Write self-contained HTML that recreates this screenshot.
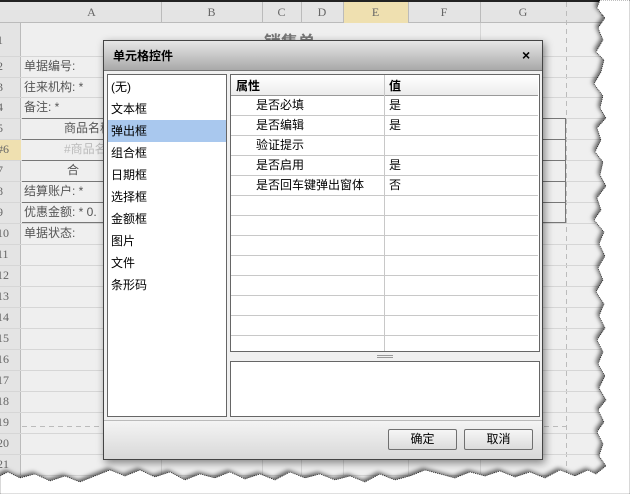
<!DOCTYPE html><html><head><meta charset="utf-8"><style>
*{margin:0;padding:0;box-sizing:border-box}
body{width:630px;height:494px;overflow:hidden;background:#fff;position:relative;font-family:"Liberation Sans","Noto Sans CJK SC",sans-serif;font-size:12px;color:#000}
.a{position:absolute}
.sh{position:absolute;left:0;top:0;width:630px;height:494px;background:#efefef}
.hl{position:absolute;height:1px;background:#d6d6d6}
.vl{position:absolute;width:1px;background:#d6d6d6}
.ch{position:absolute;top:2px;height:21px;line-height:21px;text-align:center;color:#666;font-family:"Liberation Serif",serif;font-size:12px}
.rh{position:absolute;left:-3px;width:21px;height:21px;line-height:21px;color:#666;font-size:12px;font-family:"Liberation Serif",serif}
.ct{position:absolute;left:24px;color:#555;height:21px;line-height:21px}
.li{position:absolute;left:108px;width:118px;height:22px;line-height:22px;padding-left:3px}
.tr{position:absolute;left:231px;width:307px;height:20px;border-bottom:1px solid #c8c8c8}
.tr span{position:absolute;top:0;line-height:19px}
.btn{position:absolute;top:429px;height:21px;border:1px solid #707070;border-radius:2px;background:linear-gradient(#f6f6f6,#dcdcdc);text-align:center;line-height:19px}
</style></head><body>
<div class="sh"></div>
<div class="a" style="left:0;top:0;width:630px;height:2px;background:#222"></div>
<div class="a" style="left:0;top:2px;width:630px;height:21px;background:#e4e4e4;border-bottom:1px solid #bbb"></div>
<div class="a" style="left:0;top:23px;width:21px;height:471px;background:#e4e4e4;border-right:1px solid #bbb"></div>
<div class="a" style="left:343px;top:2px;width:65px;height:21px;background:#efe0b0"></div>
<div class="a" style="left:0;top:139px;width:21px;height:21px;background:#efe0b0"></div>
<div class="ch" style="left:22px;width:139px">A</div>
<div class="ch" style="left:161px;width:101px">B</div>
<div class="ch" style="left:262px;width:39px">C</div>
<div class="ch" style="left:301px;width:42px">D</div>
<div class="ch" style="left:343px;width:65px">E</div>
<div class="ch" style="left:408px;width:72px">F</div>
<div class="ch" style="left:480px;width:86px">G</div>
<div class="ch" style="left:590px;width:30px">H</div>
<div class="vl" style="left:161px;top:2px;height:21px;background:#bbb"></div>
<div class="vl" style="left:262px;top:2px;height:21px;background:#bbb"></div>
<div class="vl" style="left:301px;top:2px;height:21px;background:#bbb"></div>
<div class="vl" style="left:343px;top:2px;height:21px;background:#bbb"></div>
<div class="vl" style="left:408px;top:2px;height:21px;background:#bbb"></div>
<div class="vl" style="left:480px;top:2px;height:21px;background:#bbb"></div>
<div class="vl" style="left:161px;top:244px;height:240px"></div>
<div class="vl" style="left:262px;top:244px;height:240px"></div>
<div class="vl" style="left:301px;top:244px;height:240px"></div>
<div class="vl" style="left:343px;top:244px;height:240px"></div>
<div class="vl" style="left:408px;top:244px;height:240px"></div>
<div class="vl" style="left:566px;top:2px;height:480px;background:repeating-linear-gradient(#bbb 0 5px,transparent 5px 9px)"></div>
<div class="vl" style="left:480px;top:23px;height:460px"></div>
<div class="hl" style="left:22px;top:426px;width:544px;background:repeating-linear-gradient(90deg,#bbb 0 5px,transparent 5px 9px)"></div>
<div class="hl" style="left:0;top:56px;width:630px"></div>
<div class="hl" style="left:0;top:77px;width:630px"></div>
<div class="hl" style="left:0;top:97px;width:630px"></div>
<div class="hl" style="left:0;top:118px;width:630px"></div>
<div class="hl" style="left:0;top:139px;width:630px"></div>
<div class="hl" style="left:0;top:160px;width:630px"></div>
<div class="hl" style="left:0;top:181px;width:630px"></div>
<div class="hl" style="left:0;top:202px;width:630px"></div>
<div class="hl" style="left:0;top:223px;width:630px"></div>
<div class="hl" style="left:0;top:244px;width:630px"></div>
<div class="hl" style="left:0;top:265px;width:630px"></div>
<div class="hl" style="left:0;top:286px;width:630px"></div>
<div class="hl" style="left:0;top:307px;width:630px"></div>
<div class="hl" style="left:0;top:328px;width:630px"></div>
<div class="hl" style="left:0;top:349px;width:630px"></div>
<div class="hl" style="left:0;top:370px;width:630px"></div>
<div class="hl" style="left:0;top:391px;width:630px"></div>
<div class="hl" style="left:0;top:412px;width:630px"></div>
<div class="hl" style="left:0;top:433px;width:630px"></div>
<div class="hl" style="left:0;top:454px;width:630px"></div>
<div class="hl" style="left:0;top:475px;width:630px"></div>
<div class="a" style="left:22px;top:118px;width:544px;height:105px;border:1px solid #777;border-left:none"></div>
<div class="a" style="left:22px;top:139px;width:544px;height:1px;background:#777"></div>
<div class="a" style="left:22px;top:160px;width:544px;height:1px;background:#777"></div>
<div class="a" style="left:22px;top:181px;width:544px;height:1px;background:#777"></div>
<div class="a" style="left:22px;top:202px;width:544px;height:1px;background:#777"></div>
<div class="rh" style="top:30px">1</div>
<div class="rh" style="top:56px">2</div><div class="rh" style="top:77px">3</div><div class="rh" style="top:97px">4</div><div class="rh" style="top:118px">5</div><div class="rh" style="top:139px">#6</div><div class="rh" style="top:160px">7</div><div class="rh" style="top:181px">8</div><div class="rh" style="top:202px">9</div><div class="rh" style="top:223px">10</div><div class="rh" style="top:244px">11</div><div class="rh" style="top:265px">12</div><div class="rh" style="top:286px">13</div><div class="rh" style="top:307px">14</div><div class="rh" style="top:328px">15</div><div class="rh" style="top:349px">16</div><div class="rh" style="top:370px">17</div><div class="rh" style="top:391px">18</div><div class="rh" style="top:412px">19</div><div class="rh" style="top:433px">20</div><div class="rh" style="top:454px">21</div>
<div class="a" style="left:264px;top:28px;font-size:17px;font-weight:bold;color:#777">销售单</div>
<div class="ct" style="top:56px">单据编号:</div>
<div class="ct" style="top:77px">往来机构: *</div>
<div class="ct" style="top:97px">备注: *</div>
<div class="ct" style="top:118px;left:64px">商品名称</div>
<div class="ct" style="top:139px;left:64px;color:#bbb">#商品名</div>
<div class="ct" style="top:160px;left:67px">合</div>
<div class="ct" style="top:181px">结算账户: *</div>
<div class="ct" style="top:202px">优惠金额: * 0.</div>
<div class="ct" style="top:223px">单据状态:</div>
<div class="a" style="left:103px;top:40px;width:440px;height:420px;background:#f0f0f0;border:1px solid #444;box-shadow:2px 3px 8px rgba(0,0,0,.45)"></div>
<div class="a" style="left:104px;top:41px;width:438px;height:30px;background:linear-gradient(#e6e6e6,#a9a9a9);border-bottom:1px solid #777"></div>
<div class="a" style="left:113px;top:48px;font-weight:bold;font-size:12px;line-height:16px">单元格控件</div>
<div class="a" style="left:522px;top:47px;font-weight:bold;font-size:14px">×</div>
<div class="a" style="left:107px;top:74px;width:120px;height:343px;background:#fff;border:1px solid #666"></div>
<div class="a" style="left:108px;top:120px;width:118px;height:22px;background:#a9c8ee"></div>
<div class="li" style="top:76px">(无)</div><div class="li" style="top:98px">文本框</div><div class="li" style="top:120px">弹出框</div><div class="li" style="top:142px">组合框</div><div class="li" style="top:164px">日期框</div><div class="li" style="top:186px">选择框</div><div class="li" style="top:208px">金额框</div><div class="li" style="top:230px">图片</div><div class="li" style="top:252px">文件</div><div class="li" style="top:274px">条形码</div>
<div class="a" style="left:230px;top:74px;width:310px;height:278px;background:#fff;border:1px solid #666"></div>
<div class="a" style="left:231px;top:75px;width:307px;height:21px;background:linear-gradient(#fff,#ececec);border-bottom:1px solid #999"></div>
<div class="a" style="left:236px;top:77px;font-weight:bold">属性</div>
<div class="a" style="left:389px;top:77px;font-weight:bold">值</div>
<div class="a" style="left:384px;top:75px;width:1px;height:276px;background:#c8c8c8"></div>
<div class="tr" style="top:96px"><span style="left:25px">是否必填</span><span style="left:158px">是</span></div>
<div class="tr" style="top:116px"><span style="left:25px">是否编辑</span><span style="left:158px">是</span></div>
<div class="tr" style="top:136px"><span style="left:25px">验证提示</span></div>
<div class="tr" style="top:156px"><span style="left:25px">是否启用</span><span style="left:158px">是</span></div>
<div class="tr" style="top:176px"><span style="left:25px">是否回车键弹出窗体</span><span style="left:158px">否</span></div>
<div class="tr" style="top:196px"></div><div class="tr" style="top:216px"></div><div class="tr" style="top:236px"></div><div class="tr" style="top:256px"></div><div class="tr" style="top:276px"></div><div class="tr" style="top:296px"></div><div class="tr" style="top:316px"></div>
<div class="a" style="left:377px;top:355px;width:16px;height:3px;border-top:1px solid #999;border-bottom:1px solid #999"></div>
<div class="a" style="left:230px;top:361px;width:310px;height:56px;background:#fff;border:1px solid #666"></div>
<div class="a" style="left:104px;top:420px;width:438px;height:39px;background:linear-gradient(#f4f4f4,#d8d8d8);border-top:1px solid #bbb"></div>
<div class="btn" style="left:388px;width:69px">确定</div>
<div class="btn" style="left:464px;width:69px">取消</div>
<svg class="a" style="left:0;top:0" width="630" height="494"><defs><filter id="f" x="-10%" y="-10%" width="120%" height="120%"><feDropShadow dx="-2" dy="-2" stdDeviation="2" flood-color="#000" flood-opacity=".6"/></filter></defs>
<path filter="url(#f)" fill="#fff" stroke="#000" stroke-width=".6" stroke-dasharray="1 1" d="M630,0 L600,0 L597,8 L605,18 L598,28 L603,40 L596,52 L604,60 L601,72 L594,84 L603,96 L600,108 L606,118 L597,128 L601,140 L595,152 L603,162 L600,175 L606,186 L597,198 L601,210 L594,220 L604,232 L599,244 L605,256 L598,268 L603,280 L596,292 L604,304 L599,316 L605,328 L597,340 L603,352 L598,364 L605,376 L599,388 L606,400 L598,410 L604,422 L597,432 L603,444 L599,456 L606,466 L596,474 L588,470 L575,476 L560,470 L545,478 L530,472 L515,477 L500,471 L485,476 L470,472 L455,478 L440,474 L425,470 L410,476 L395,480 L380,474 L365,482 L350,476 L335,480 L320,474 L305,478 L290,472 L275,480 L260,474 L245,479 L230,472 L215,478 L200,474 L185,480 L170,472 L155,477 L140,470 L125,476 L110,470 L95,476 L80,482 L65,476 L50,481 L35,474 L20,478 L8,472 L0,476 L0,494 L630,494 Z"/></svg>
</body></html>
